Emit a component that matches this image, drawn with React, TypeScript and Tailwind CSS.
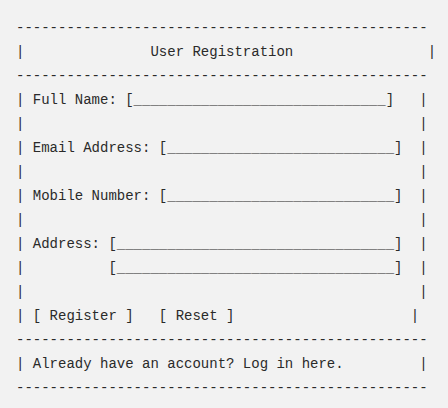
import React from "react";

const dash = "-".repeat(49);
const empty = "|" + " ".repeat(47) + "|";

const lines = [
  dash,
  "|" + " ".repeat(15) + "User Registration" + " ".repeat(16) + "|",
  dash,
  "| Full Name: [" + "_".repeat(30) + "]   |",
  empty,
  "| Email Address: [" + "_".repeat(27) + "]  |",
  empty,
  "| Mobile Number: [" + "_".repeat(27) + "]  |",
  empty,
  "| Address: [" + "_".repeat(33) + "]  |",
  "|" + " ".repeat(10) + "[" + "_".repeat(33) + "]  |",
  empty,
  "| [ Register ]   [ Reset ]" + " ".repeat(21) + "|",
  dash,
  "| Already have an account? Log in here." + " ".repeat(9) + "|",
  dash,
];

export default function App() {
  return (
    <div className="min-h-screen w-full bg-[#f2f2f2] p-4">
      <pre className="m-0 font-['Liberation_Mono',monospace] text-[14px] leading-[24px] text-[#2a2a2a]">
        {lines.join("\n")}
      </pre>
    </div>
  );
}
